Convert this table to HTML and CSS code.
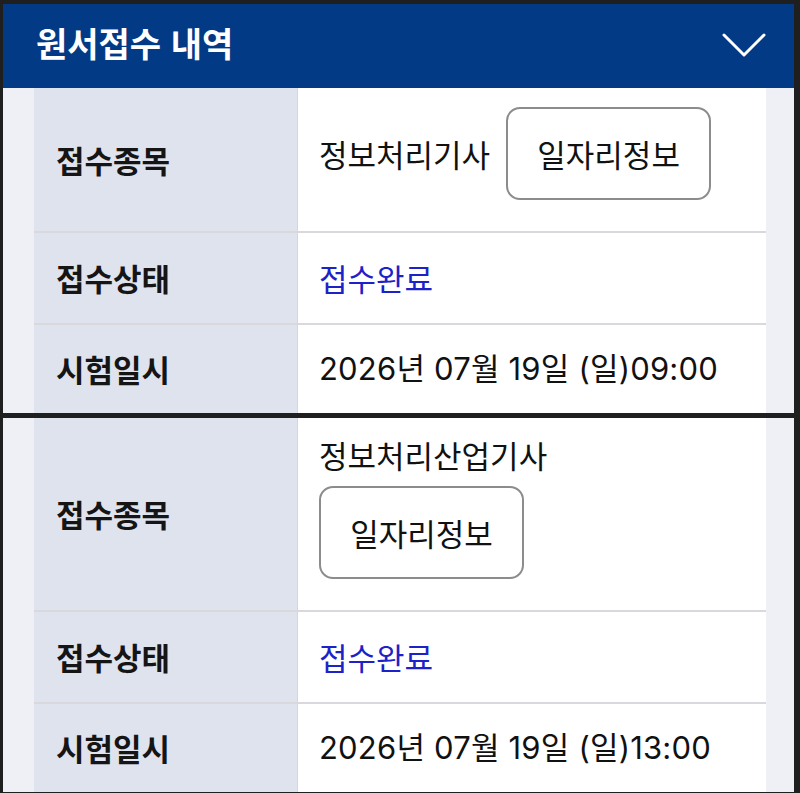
FILE: index.html
```html
<!DOCTYPE html>
<html lang="ko">
<head>
<meta charset="utf-8">
<title>원서접수 내역</title>
<link rel="stylesheet" href="styles.css">
</head>
<body>
<div class="page">
  <header class="head">
    <h1 class="head-title">원서접수 내역</h1>
    <svg class="chev" width="44" height="26" viewBox="0 0 44 26" aria-hidden="true">
      <polyline points="2,3 22,23 42,3" fill="none" stroke="#fff" stroke-width="3" stroke-linecap="round" stroke-linejoin="round"/>
    </svg>
  </header>

  <section class="block">
    <div class="table">
      <div class="row row-first">
        <div class="label">접수종목</div>
        <div class="value value-wrap">
          <span class="subject">정보처리기사</span>
          <button class="job-btn" type="button">일자리정보</button>
        </div>
      </div>
      <div class="row">
        <div class="label">접수상태</div>
        <div class="value"><span class="status">접수완료</span></div>
      </div>
      <div class="row row-last">
        <div class="label">시험일시</div>
        <div class="value date">2026년 07월 19일 (일)09:00</div>
      </div>
    </div>
  </section>

  <section class="block block-next">
    <div class="table">
      <div class="row row-first">
        <div class="label">접수종목</div>
        <div class="value value-wrap">
          <span class="subject">정보처리산업기사</span>
          <button class="job-btn" type="button">일자리정보</button>
        </div>
      </div>
      <div class="row">
        <div class="label">접수상태</div>
        <div class="value"><span class="status">접수완료</span></div>
      </div>
      <div class="row row-last">
        <div class="label">시험일시</div>
        <div class="value date">2026년 07월 19일 (일)13:00</div>
      </div>
    </div>
  </section>
</div>
</body>
</html>
```

FILE: styles.css
```css
* { box-sizing: border-box; }

html, body {
  margin: 0;
  padding: 0;
  background: #1f1f20;
}

body {
  font-family: "Noto Sans CJK KR", "Noto Sans", sans-serif;
  color: #141414;
}

.page {
  padding: 4px 6px 3px 3px;
  width: 800px;
}

.head {
  height: 84px;
  background: #033a85;
  display: flex;
  align-items: center;
  justify-content: space-between;
  padding: 0 28px 6px 33px;
}

.head-title {
  margin: 0;
  font-size: 34px;
  font-weight: 600;
  color: #ffffff;
  letter-spacing: 0;
  line-height: 40px;
}

.chev {
  display: block;
  margin-top: 4px;
}

.block {
  background: #eef0f5;
  padding: 0 28px 0 31px;
}

.block-next {
  margin-top: 5px;
}

.table {
  background: #ffffff;
}

.row {
  display: grid;
  grid-template-columns: 264px 1fr;
  border-bottom: 2px solid #d9d9dd;
}

.row-last {
  border-bottom: none;
}

.label {
  background: #dfe3ed;
  border-right: 1px solid #d3d6de;
  display: flex;
  align-items: center;
  padding-left: 22px;
  font-size: 31px;
  font-weight: 700;
  line-height: 40px;
  color: #151515;
}

.value {
  font-family: "Inter", "Noto Sans CJK KR", sans-serif;
  font-size: 31px;
  line-height: 40px;
  padding: 25px 24px 25px 21px;
  display: flex;
  align-items: center;
  color: #111111;
}

.date {
  letter-spacing: 0.2px;
}

.row-last .value {
  padding-top: 24px;
  padding-bottom: 24px;
}

.value-wrap {
  flex-wrap: wrap;
  column-gap: 16px;
  row-gap: 13px;
  padding-top: 19px;
  padding-bottom: 31px;
}

.subject {
  font-family: "Noto Sans CJK KR", sans-serif;
  line-height: 36px;
}

.status {
  font-family: "Noto Sans CJK KR", sans-serif;
  color: #1c22c8;
}

.job-btn {
  width: 205px;
  height: 93px;
  border: 2px solid #8c8c8c;
  border-radius: 14px;
  background: #ffffff;
  font-family: "Noto Sans CJK KR", sans-serif;
  font-size: 31px;
  color: #111111;
  display: inline-flex;
  align-items: center;
  justify-content: center;
  padding: 0;
  cursor: pointer;
}
```
